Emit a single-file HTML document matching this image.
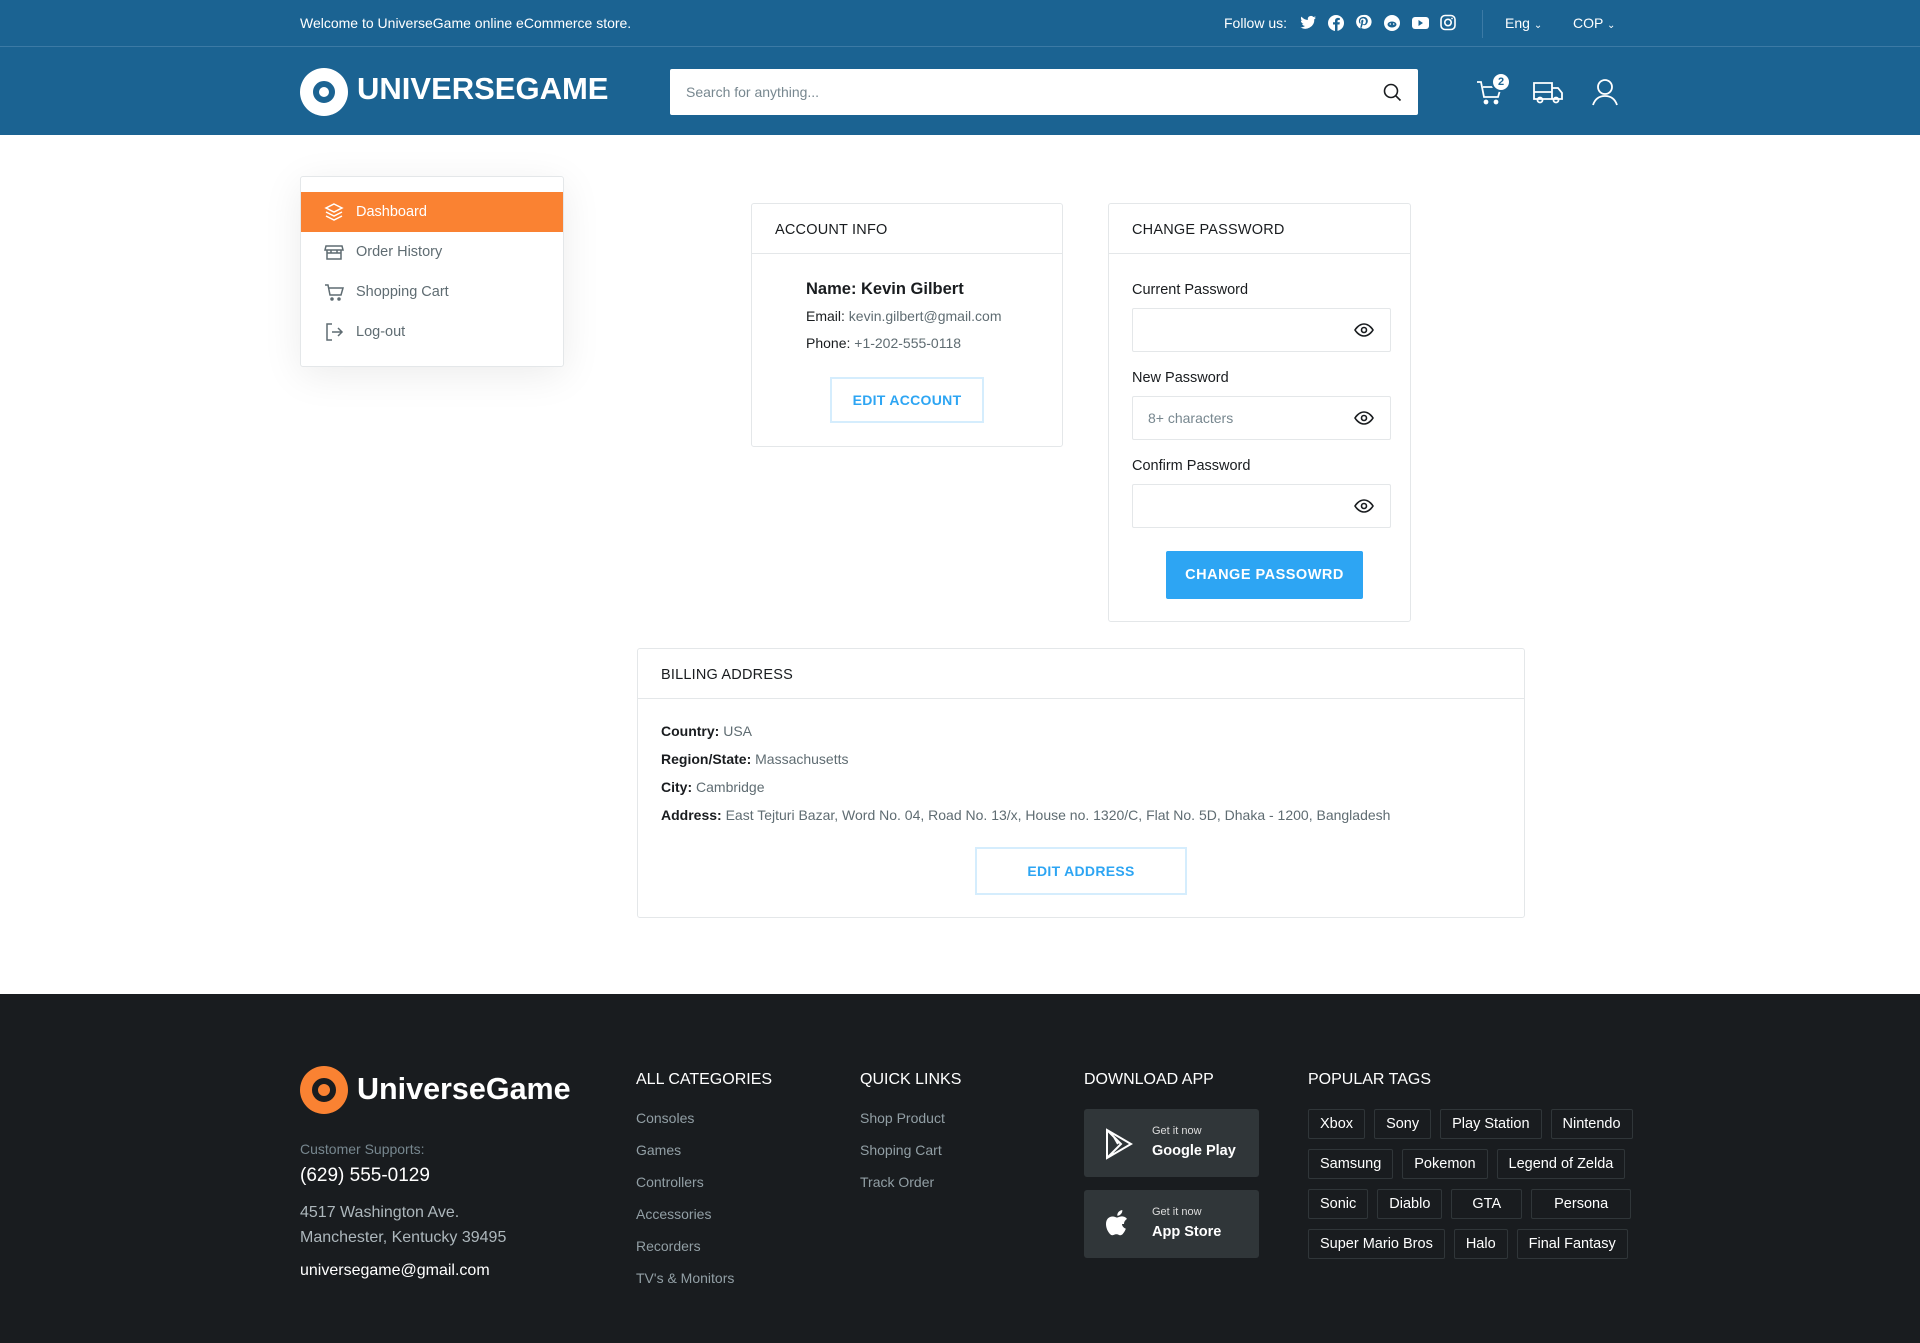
<!DOCTYPE html>
<html><head><meta charset="utf-8"><style>
*{box-sizing:border-box;margin:0;padding:0}
body{width:1920px;height:1343px;position:relative;font-family:"Liberation Sans",sans-serif;background:#fff;color:#191C1F;overflow:hidden}
.a{position:absolute}
.top{left:0;top:0;width:1920px;height:47px;background:#1B6392;border-bottom:1px solid #3c7aa5;color:#fff;font-size:14px}
.hdr{left:0;top:47px;width:1920px;height:88px;background:#1B6392}
.card{border:1px solid #E4E7E9;border-radius:3px;background:#fff}
.ch{font-size:14.5px;color:#191C1F;height:50px;border-bottom:1px solid #E4E7E9;padding:18px 23px;letter-spacing:.2px}
.menu div{height:40px;display:flex;align-items:center;padding-left:23px;font-size:14.5px;color:#5F6C72}
.menu svg{margin-right:12px}
.lbl{font-size:14.5px;color:#191C1F}
.inp{border:1px solid #E4E7E9;border-radius:2px;width:259px;height:44px;font-size:14px;color:#77878F;padding:13px 15px}
.eye{position:absolute;right:16px;top:13px}
.btn2{border:2px solid #D5EDFD;color:#2DA5F3;font-weight:bold;font-size:14px;display:flex;align-items:center;justify-content:center;letter-spacing:.3px}
.bl{font-size:14px;color:#5F6C72}
.bl b{color:#191C1F}
.ft{left:0;top:994px;width:1920px;height:349px;background:#191C1F;color:#fff}
.fh{font-size:16px;color:#fff}
.fl{font-size:14px;color:#929FA5;line-height:32px}
.tags{display:flex;flex-wrap:wrap;gap:10px 9px;width:335px}
.tags span{border:1px solid #303639;height:30px;padding:0 11px;font-size:14.5px;display:flex;align-items:center;border-radius:2px}
.app{background:#303639;border-radius:3px;width:175px;height:68px}
</style></head><body>
<div class="a top">
<div class="a" style="left:300px;top:15px">Welcome to UniverseGame online eCommerce store.</div>
<div class="a" style="left:1224px;top:15px">Follow us:</div>
<svg class="a" style="left:1300px;top:14px" width="160" height="18" viewBox="0 0 160 18" fill="#fff">
<path d="M16 3.5c-.6.3-1.2.4-1.9.5.7-.4 1.2-1 1.4-1.8-.6.4-1.3.6-2.1.8a3.2 3.2 0 0 0-5.5 2.9C5.3 5.8 3 4.5 1.4 2.6c-.9 1.5-.4 3.4 1 4.3-.5 0-1-.2-1.5-.4 0 1.6 1.1 2.9 2.6 3.2-.5.1-1 .2-1.5.1.4 1.3 1.6 2.2 3 2.2A6.5 6.5 0 0 1 .3 13.3 9.1 9.1 0 0 0 14.3 5.2c.7-.4 1.2-1 1.700-1.7z"/>
<circle cx="36" cy="9" r="8"/><path d="M37.5 17V10.5h2l.3-2.2h-2.3V7c0-.6.2-1 1.1-1h1.2V4a14 14 0 0 0-1.8-.1c-1.8 0-3 1.1-3 3.1v1.3h-2v2.2h2V17z" fill="#1B6392"/>
<path d="M63 1a7 7 0 0 0-2.5 13.5c-.1-.6-.1-1.4 0-2l.9-3.8s-.2-.5-.2-1.1c0-1 .6-1.8 1.300-1.8.6 0 .9.5.9 1 0 .6-.4 1.5-.6 2.300-.2.7.3 1.200 1 1.200 1.200 0 2.100-1.300 2.100-3.100 0-1.600-1.200-2.800-2.800-2.800-1.900 0-3 1.400-3 2.900 0 .6.200 1.200.500 1.500l-.3 1c-.9-.4-1.400-1.700-1.400-2.700 0-2.200 1.600-4.200 4.600-4.200 2.400 0 4.300 1.700 4.300 4 0 2.400-1.500 4.300-3.600 4.300-.7 0-1.400-.4-1.600-.8l-.4 1.700c-.2.600-.6 1.400-.9 1.900A7 7 0 1 0 63 1z"/>
<circle cx="92" cy="9" r="8"/><ellipse cx="92" cy="10.5" rx="4.5" ry="3" fill="#1B6392"/><circle cx="90.3" cy="10" r=".8"/><circle cx="93.7" cy="10" r=".8"/>
<rect x="112" y="3" width="17" height="12" rx="3"/><path d="M118.5 6v6l4.5-3z" fill="#1B6392"/>
<rect x="141" y="1.5" width="14" height="14" rx="4" fill="none" stroke="#fff" stroke-width="1.6"/><circle cx="148" cy="8.5" r="3.2" fill="none" stroke="#fff" stroke-width="1.6"/><circle cx="152" cy="4.5" r=".9"/></svg>
<div class="a" style="left:1482px;top:10px;width:1px;height:28px;background:#3c7aa5"></div>
<div class="a" style="left:1505px;top:15px">Eng <span style="font-size:10px">&#8964;</span></div>
<div class="a" style="left:1573px;top:15px">COP <span style="font-size:10px">&#8964;</span></div>
</div>
<div class="a hdr">
<div class="a" style="left:300px;top:21px;width:48px;height:48px;border-radius:50%;background:#fff"><div class="a" style="left:13px;top:13px;width:22px;height:22px;border-radius:50%;border:6px solid #1B6392"></div></div>
<div class="a" style="left:357px;top:24px;font-size:31px;font-weight:bold;color:#fff">UNIVERSEGAME</div>
<div class="a" style="left:670px;top:22px;width:748px;height:46px;background:#fff;border-radius:2px;font-size:14px;color:#77878F;padding:15px 16px">Search for anything...</div>
<svg class="a" style="left:1382px;top:35px" width="20" height="20" fill="none" stroke="#191C1F" stroke-width="1.6"><circle cx="9" cy="9" r="6.5"/><path d="M14 14l4.5 4.5"/></svg>
<svg class="a" style="left:1475px;top:30px" width="30" height="30" fill="none" stroke="#fff" stroke-width="1.8"><path d="M2 5h4l3 15h14l3-10H8"/><circle cx="11" cy="25" r="1.5" fill="#fff"/><circle cx="21" cy="25" r="1.5" fill="#fff"/></svg>
<div class="a" style="left:1491px;top:25px;width:20px;height:20px;border-radius:50%;background:#fff;border:2px solid #1B6392;color:#1B6392;font-size:11px;font-weight:bold;text-align:center;line-height:16px">2</div>
<svg class="a" style="left:1532px;top:30px" width="32" height="30" fill="none" stroke="#fff" stroke-width="1.8"><path d="M2 6h18v16H2zM20 11h6l4 5v6H20"/><circle cx="8" cy="23" r="2.5"/><circle cx="24" cy="23" r="2.5"/><path d="M2 15h18"/></svg>
<svg class="a" style="left:1590px;top:30px" width="30" height="30" fill="none" stroke="#fff" stroke-width="1.8"><circle cx="15" cy="10" r="7"/><path d="M3 28c2-6 6-9 12-9s10 3 12 9"/></svg>
</div>

<div class="a card menu" style="left:300px;top:176px;width:264px;height:191px;box-shadow:0 8px 40px rgba(0,0,0,.08);padding-top:15px">
<div style="background:#FA8232;color:#fff;height:40px"><svg width="20" height="20" fill="none" stroke="#fff" stroke-width="1.5"><path d="M10 2l8 4-8 4-8-4zM2 10l8 4 8-4M2 14l8 4 8-4"/></svg>Dashboard</div>
<div><svg width="20" height="20" fill="none" stroke="#5F6C72" stroke-width="1.5"><path d="M3 8v9h14V8M2 4h16l1 4H1zM3 11h14M7 8v3M13 8v3"/></svg>Order History</div>
<div><svg width="20" height="20" fill="none" stroke="#5F6C72" stroke-width="1.5"><path d="M1 3h3l2 10h11l2-7H5"/><circle cx="8" cy="17" r="1" fill="#5F6C72"/><circle cx="15" cy="17" r="1" fill="#5F6C72"/></svg>Shopping Cart</div>
<div><svg width="20" height="20" fill="none" stroke="#5F6C72" stroke-width="1.5"><path d="M8 2H3v16h5M8 10h10M14 6l4 4-4 4"/></svg>Log-out</div>
</div>

<div class="a card" style="left:751px;top:203px;width:312px;height:244px">
<div class="ch">ACCOUNT INFO</div>
<div class="a" style="left:54px;top:76px;font-size:16.5px;font-weight:bold;color:#191C1F">Name: Kevin Gilbert</div>
<div class="a bl" style="left:54px;top:104px;color:#191C1F">Email: <span style="color:#5F6C72">kevin.gilbert@gmail.com</span></div>
<div class="a bl" style="left:54px;top:131px;color:#191C1F">Phone: <span style="color:#5F6C72">+1-202-555-0118</span></div>
<div class="a btn2" style="left:78px;top:173px;width:154px;height:46px">EDIT ACCOUNT</div>
</div>

<div class="a card" style="left:1108px;top:203px;width:303px;height:419px">
<div class="ch">CHANGE PASSWORD</div>
<div class="a lbl" style="left:23px;top:78px">Current Password</div>
<div class="a inp" style="left:23px;top:104px"><svg class="eye" width="20" height="16" fill="none" stroke="#191C1F" stroke-width="1.6"><path d="M1 8s3.5-6 9-6 9 6 9 6-3.5 6-9 6-9-6-9-6z"/><circle cx="10" cy="8" r="2.5"/></svg></div>
<div class="a lbl" style="left:23px;top:166px">New Password</div>
<div class="a inp" style="left:23px;top:192px">8+ characters<svg class="eye" width="20" height="16" fill="none" stroke="#191C1F" stroke-width="1.6"><path d="M1 8s3.5-6 9-6 9 6 9 6-3.5 6-9 6-9-6-9-6z"/><circle cx="10" cy="8" r="2.5"/></svg></div>
<div class="a lbl" style="left:23px;top:254px">Confirm Password</div>
<div class="a inp" style="left:23px;top:280px"><svg class="eye" width="20" height="16" fill="none" stroke="#191C1F" stroke-width="1.6"><path d="M1 8s3.5-6 9-6 9 6 9 6-3.5 6-9 6-9-6-9-6z"/><circle cx="10" cy="8" r="2.5"/></svg></div>
<div class="a" style="left:57px;top:347px;width:197px;height:48px;background:#2DA5F3;border-radius:2px;color:#fff;font-weight:bold;font-size:14.5px;display:flex;align-items:center;justify-content:center;letter-spacing:.5px">CHANGE PASSOWRD</div>
</div>

<div class="a card" style="left:637px;top:648px;width:888px;height:270px">
<div class="ch">BILLING ADDRESS</div>
<div class="a bl" style="left:23px;top:74px"><b>Country:</b> USA</div>
<div class="a bl" style="left:23px;top:102px"><b>Region/State:</b> Massachusetts</div>
<div class="a bl" style="left:23px;top:130px"><b>City:</b> Cambridge</div>
<div class="a bl" style="left:23px;top:158px"><b>Address:</b> East Tejturi Bazar, Word No. 04, Road No. 13/x, House no. 1320/C, Flat No. 5D, Dhaka - 1200, Bangladesh</div>
<div class="a btn2" style="left:337px;top:198px;width:212px;height:48px">EDIT ADDRESS</div>
</div>

<div class="a ft">
<div class="a" style="left:300px;top:72px;width:48px;height:48px;border-radius:50%;background:#FA8232"><div class="a" style="left:12px;top:12px;width:24px;height:24px;border-radius:50%;border:6px solid #191C1F"></div></div>
<div class="a" style="left:357px;top:78px;font-size:30.5px;font-weight:bold">UniverseGame</div>
<div class="a" style="left:300px;top:147px;font-size:14px;color:#77878F">Customer Supports:</div>
<div class="a" style="left:300px;top:171px;font-size:19px">(629) 555-0129</div>
<div class="a" style="left:300px;top:206px;font-size:16px;color:#ADB7BC;line-height:25px">4517 Washington Ave.<br>Manchester, Kentucky 39495</div>
<div class="a" style="left:300px;top:268px;font-size:16px">universegame@gmail.com</div>
<div class="a fh" style="left:636px;top:77px">ALL CATEGORIES</div>
<div class="a fl" style="left:636px;top:108px">Consoles<br>Games<br>Controllers<br>Accessories<br>Recorders<br>TV's &amp; Monitors</div>
<div class="a fh" style="left:860px;top:77px">QUICK LINKS</div>
<div class="a fl" style="left:860px;top:108px">Shop Product<br>Shoping Cart<br>Track Order</div>
<div class="a fh" style="left:1084px;top:77px">DOWNLOAD APP</div>
<div class="a app" style="left:1084px;top:115px">
<svg class="a" style="left:20px;top:19px" width="30" height="32" fill="none" stroke="#fff" stroke-width="2"><path d="M3 2l24 14L3 30zM3 2l14 14L3 30M10 9l4 7"/></svg>
<div class="a" style="left:68px;top:16px;font-size:11px;color:#ddd">Get it now</div><div class="a" style="left:68px;top:34px;font-size:14.5px;font-weight:bold">Google Play</div></div>
<div class="a app" style="left:1084px;top:196px">
<svg class="a" style="left:20px;top:16px" width="28" height="34" fill="#fff"><path d="M20 18c0-3.5 3-5 3-5-1.6-2.4-4.2-2.6-5-2.6-2.100-.2-4 1.2-5 1.2s-2.7-1.2-4.400-1.1C5 10.6 2 13 2 18c0 3 1.100 6.100 2.500 8.100 1.200 1.700 2.300 3.200 3.900 3.100 1.500-.1 2.100-1 4-1s2.400 1 4 1c1.700 0 2.700-1.600 3.800-3.200.8-1.200 1.300-2.400 1.600-3.300 0 0-3.800-1.400-3.800-4.700zM17 8c.9-1 1.500-2.500 1.300-4-1.300.1-2.800.9-3.700 1.900-.800.900-1.500 2.400-1.300 3.800 1.400.1 2.800-.7 3.700-1.700z"/></svg>
<div class="a" style="left:68px;top:16px;font-size:11px;color:#ddd">Get it now</div><div class="a" style="left:68px;top:34px;font-size:14.5px;font-weight:bold">App Store</div></div>
<div class="a fh" style="left:1308px;top:77px">POPULAR TAGS</div>
<div class="a tags" style="left:1308px;top:115px">
<span>Xbox</span><span>Sony</span><span>Play Station</span><span>Nintendo</span>
<span>Samsung</span><span>Pokemon</span><span>Legend of Zelda</span>
<span>Sonic</span><span>Diablo</span><span style="padding:0 20px">GTA</span><span style="padding:0 22px">Persona</span>
<span>Super Mario Bros</span><span>Halo</span><span>Final Fantasy</span>
</div>
</div>
</body></html>
